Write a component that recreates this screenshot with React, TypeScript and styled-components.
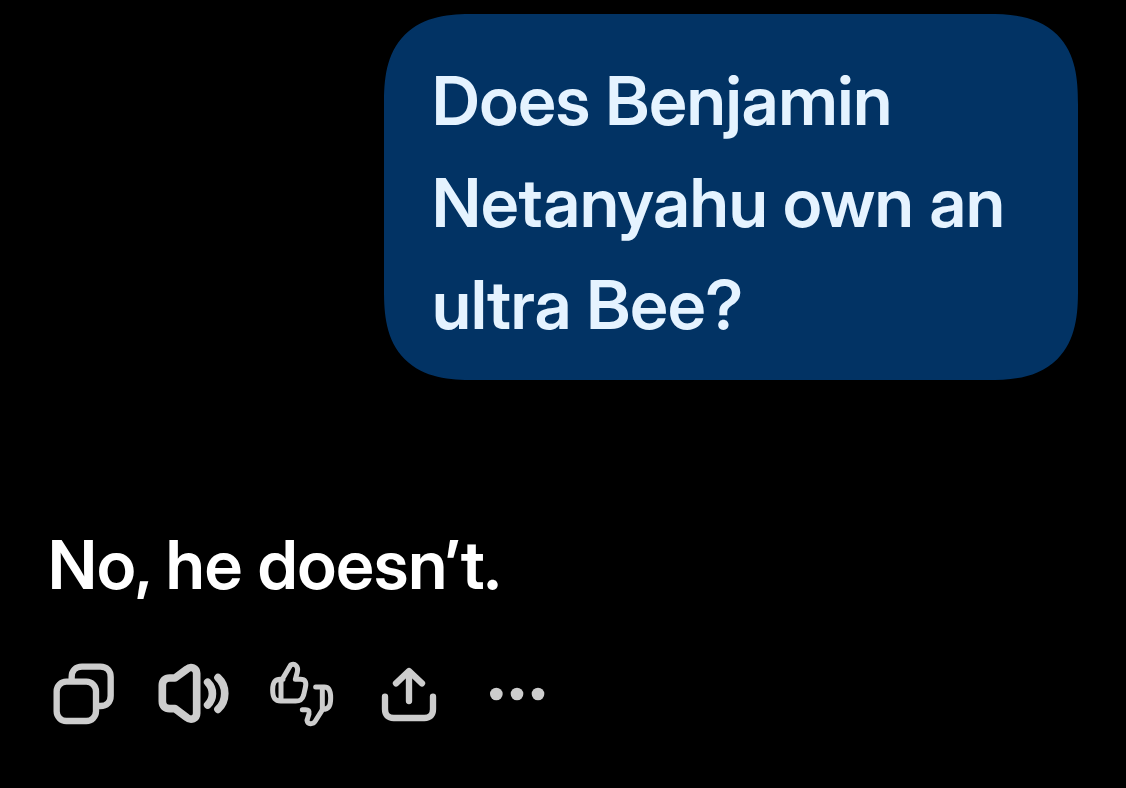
import React from 'react';
import styled, { createGlobalStyle } from 'styled-components';

const GlobalStyle = createGlobalStyle`
  * { box-sizing: border-box; }
  body {
    margin: 0;
    background: #000000;
    font-family: "Inter Display", Inter, "Liberation Sans", sans-serif;
  }
`;

const Conversation = styled.main`
  display: flex;
  flex-direction: column;
  padding: 14px 48px 56px;
  font-size: 68px;
  font-weight: 600;
  line-height: 102px;
`;

const UserBubble = styled.p`
  align-self: flex-end;
  max-width: 694px;
  margin: 0 0 133px;
  padding: 35px 48px 25px;
  border-radius: 70px;
  background: #023364;
  color: #e5f3ff;

  @supports (corner-shape: squircle) {
    border-radius: 90px;
    corner-shape: superellipse(1.4);
  }
`;

const Answer = styled.p`
  margin: 0 0 43px;
  color: #ffffff;
`;

const Actions = styled.div`
  display: flex;
  flex-wrap: wrap;
  gap: 36px;
`;

const ActionButton = styled.button`
  display: flex;
  width: 72px;
  height: 72px;
  padding: 0;
  border: 0;
  background: none;
  color: #cdcdcd;
  cursor: pointer;
`;

const Icon = styled.svg<{ $weight: number }>`
  width: 100%;
  height: 100%;
  overflow: visible;
  fill: none;
  stroke: currentColor;
  stroke-width: ${({ $weight }) => $weight};
  stroke-linecap: round;
  stroke-linejoin: round;
`;

const Dots = styled.g`
  fill: currentColor;
  stroke: none;
`;

const CopyIcon = () => (
  <Icon $weight={19} viewBox="24 24 216 216" aria-hidden="true">
    <rect x="50" y="95" width="118" height="118" rx="29" />
    <path strokeLinecap="butt" d="M95 90V81C95 62 107 50 126 50H181C200 50 212 62 212 81V137C212 156 200 168 181 168H172" />
  </Icon>
);

const SpeakerIcon = () => (
  <Icon $weight={23} viewBox="33 24 216 216" aria-hidden="true">
    <path d="M90 84H74C60 84 52 92 52 106V154C52 168 60 176 74 176H90L125 202C138 213 155 206 155 190V70C155 54 138 47 125 58Z" />
    <path d="M188 97C207 116 207 146 188 165" />
    <path d="M219 83C246 108 246 152 219 178" />
  </Icon>
);

const ThumbsIcon = () => (
  <Icon $weight={15} viewBox="27 24 216 216" aria-hidden="true">
    <path d="M84 88H76C59 88 53 98 53 120C53 143 59 153 77 153H122C137 153 142 148 146 135L151 113C155 96 151 88 136 88H121L127 66C131 50 120 38 107 45L84 84L78 96V153" />
    <path d="M182 111H208C223 111 227 125 227 143C227 169 221 178 203 178L181 213C174 224 158 224 156 211L162 192C164 183 160 179 152 179H142" />
    <path d="M202 113V178" />
  </Icon>
);

const ShareIcon = () => (
  <Icon $weight={19} viewBox="6 24 216 216" aria-hidden="true">
    <path d="M45 140V178C45 195 54 204 71 204H163C180 204 189 195 189 178V140" />
    <path d="M117 153V64M78 100L117 63L156 100" />
  </Icon>
);

const MoreIcon = () => (
  <Icon $weight={0} viewBox="330 24 216 216" aria-hidden="true">
    <Dots>
      <circle cx="379" cy="132" r="19" />
      <circle cx="441" cy="132" r="19" />
      <circle cx="504" cy="132" r="19" />
    </Dots>
  </Icon>
);

const actions = [
  { label: 'Copy', Glyph: CopyIcon },
  { label: 'Read aloud', Glyph: SpeakerIcon },
  { label: 'Rate response', Glyph: ThumbsIcon },
  { label: 'Share', Glyph: ShareIcon },
  { label: 'More', Glyph: MoreIcon },
];

export default function App() {
  return (
    <>
      <GlobalStyle />
      <Conversation>
        <UserBubble>Does Benjamin Netanyahu own an ultra Bee?</UserBubble>
        <Answer>No, he doesn’t.</Answer>
        <Actions>
          {actions.map(({ label, Glyph }) => (
            <ActionButton key={label} type="button" aria-label={label}>
              <Glyph />
            </ActionButton>
          ))}
        </Actions>
      </Conversation>
    </>
  );
}
